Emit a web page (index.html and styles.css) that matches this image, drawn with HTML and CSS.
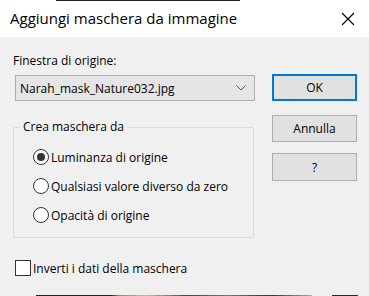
FILE: index.html
```html
<!DOCTYPE html>
<html lang="it">
<head>
  <meta charset="UTF-8">
  <title>Aggiungi maschera da immagine</title>
  <link rel="stylesheet" href="styles.css">
</head>
<body>
  <div class="window">
    <div class="edge-top"><span class="edge-dark"></span></div>
    <header class="titlebar">
      <span class="title">Aggiungi maschera da immagine</span>
      <svg class="close" width="14" height="14" viewBox="0 0 14 14">
        <path d="M1 1 L13 13 M13 1 L1 13" stroke="#000" stroke-width="1.1" fill="none"/>
      </svg>
    </header>

    <main class="content">
      <div class="left">
        <label class="field-label">Finestra di origine:</label>
        <div class="select">
          <span>Narah_mask_Nature032.jpg</span>
          <svg width="10" height="6" viewBox="0 0 10 6">
            <path d="M0.5 0.5 L5 5 L9.5 0.5" stroke="#555" stroke-width="1" fill="none"/>
          </svg>
        </div>

        <fieldset class="group">
          <legend>Crea maschera da</legend>
          <div class="radio-list">
            <div class="radio-row"><span class="radio checked"></span>Luminanza di origine</div>
            <div class="radio-row"><span class="radio"></span>Qualsiasi valore diverso da zero</div>
            <div class="radio-row"><span class="radio"></span>Opacità di origine</div>
          </div>
        </fieldset>

        <div class="check-row"><span class="checkbox"></span>Inverti i dati della maschera</div>
      </div>

      <div class="right">
        <button class="btn btn-default">OK</button>
        <button class="btn">Annulla</button>
        <button class="btn btn-help">?</button>
      </div>
    </main>

    <div class="edge-bottom">
      <span class="seg seg1"></span>
      <span class="seg seg2"></span>
    </div>
  </div>
</body>
</html>
```

FILE: styles.css
```css
/* Finestra di dialogo */
* {
  margin: 0;
  padding: 0;
  box-sizing: border-box;
}
body {
  width: 370px;
  height: 296px;
  overflow: hidden;
  background-color: #f0f0f0;
  font-family: 'Open Sans', 'Noto Sans', sans-serif;
  font-size: 12px;
  color: #000;
}
.window {
  display: flex;
  flex-direction: column;
  height: 296px;
  border-right: 1px solid #d6d6d6;
}
.edge-top {
  height: 1px;
  background-color: #fff;
  display: flex;
}
.edge-dark {
  margin-left: 56px;
  width: 184px;
  background-color: #222;
}
.titlebar {
  height: 36px;
  background-color: #ffffff;
  display: flex;
  align-items: center;
  justify-content: space-between;
  padding: 0 14px 0 10px;
}
.title {
  font-size: 15px;
  margin-top: -2px;
}
.close {
  margin-top: -1px;
}

/* Contenuto */
.content {
  flex: 1;
  display: flex;
  padding: 16px 0 0 13px;
}
.left {
  width: 242px;
  display: flex;
  flex-direction: column;
}
.field-label {
  line-height: 16px;
  height: 16px;
}
.select {
  margin: 6px 0 0 2px;
  width: 240px;
  height: 26px;
  background-color: #e5e5e5;
  border: 1px solid #adadad;
  display: flex;
  align-items: center;
  justify-content: space-between;
  padding: 0 8px 0 4px;
}
.group {
  margin-top: 18px;
  width: 241px;
  height: 119px;
  border: 1px solid #dcdcdc;
  padding: 0;
}
.group legend {
  margin-left: 6px;
  padding: 0 3px;
  line-height: 16px;
}
.radio-list {
  display: flex;
  flex-direction: column;
  gap: 13px;
  padding: 14px 0 0 19px;
}
.radio-row,
.check-row {
  display: flex;
  align-items: center;
  gap: 2px;
  height: 16px;
}
.radio {
  width: 16px;
  height: 16px;
  border: 1px solid #333;
  border-radius: 50%;
  background-color: #fff;
  display: flex;
  align-items: center;
  justify-content: center;
}
.radio.checked::after {
  content: '';
  width: 8px;
  height: 8px;
  border-radius: 50%;
  background-color: #333;
}
.check-row {
  margin: 22px 0 0 2px;
}
.checkbox {
  width: 16px;
  height: 16px;
  border: 1px solid #333;
  background-color: #fff;
}

/* Pulsanti */
.right {
  display: flex;
  flex-direction: column;
  margin-left: 17px;
  padding-top: 21px;
  gap: 14px;
}
.btn {
  width: 85px;
  height: 27px;
  background-color: #e1e1e1;
  border: 1px solid #adadad;
  font-family: inherit;
  font-size: 12px;
  color: #000;
}
.btn-default {
  border: 2px solid #0078d7;
}
.btn-help {
  margin-top: -3px;
  height: 28px;
}

.edge-bottom {
  height: 2px;
  display: flex;
}
.seg {
  height: 1px;
  margin-top: 1px;
  background-color: #2a2a2a;
}
.seg1 {
  margin-left: 36px;
  width: 276px;
  background: linear-gradient(90deg, #222 0, #222 27%, #a08070 30%, #c9b8a8 40%, #444 55%, #777 70%, #333 85%, #aaa 100%);
}
.seg2 {
  margin-left: 20px;
  width: 26px;
}
```
